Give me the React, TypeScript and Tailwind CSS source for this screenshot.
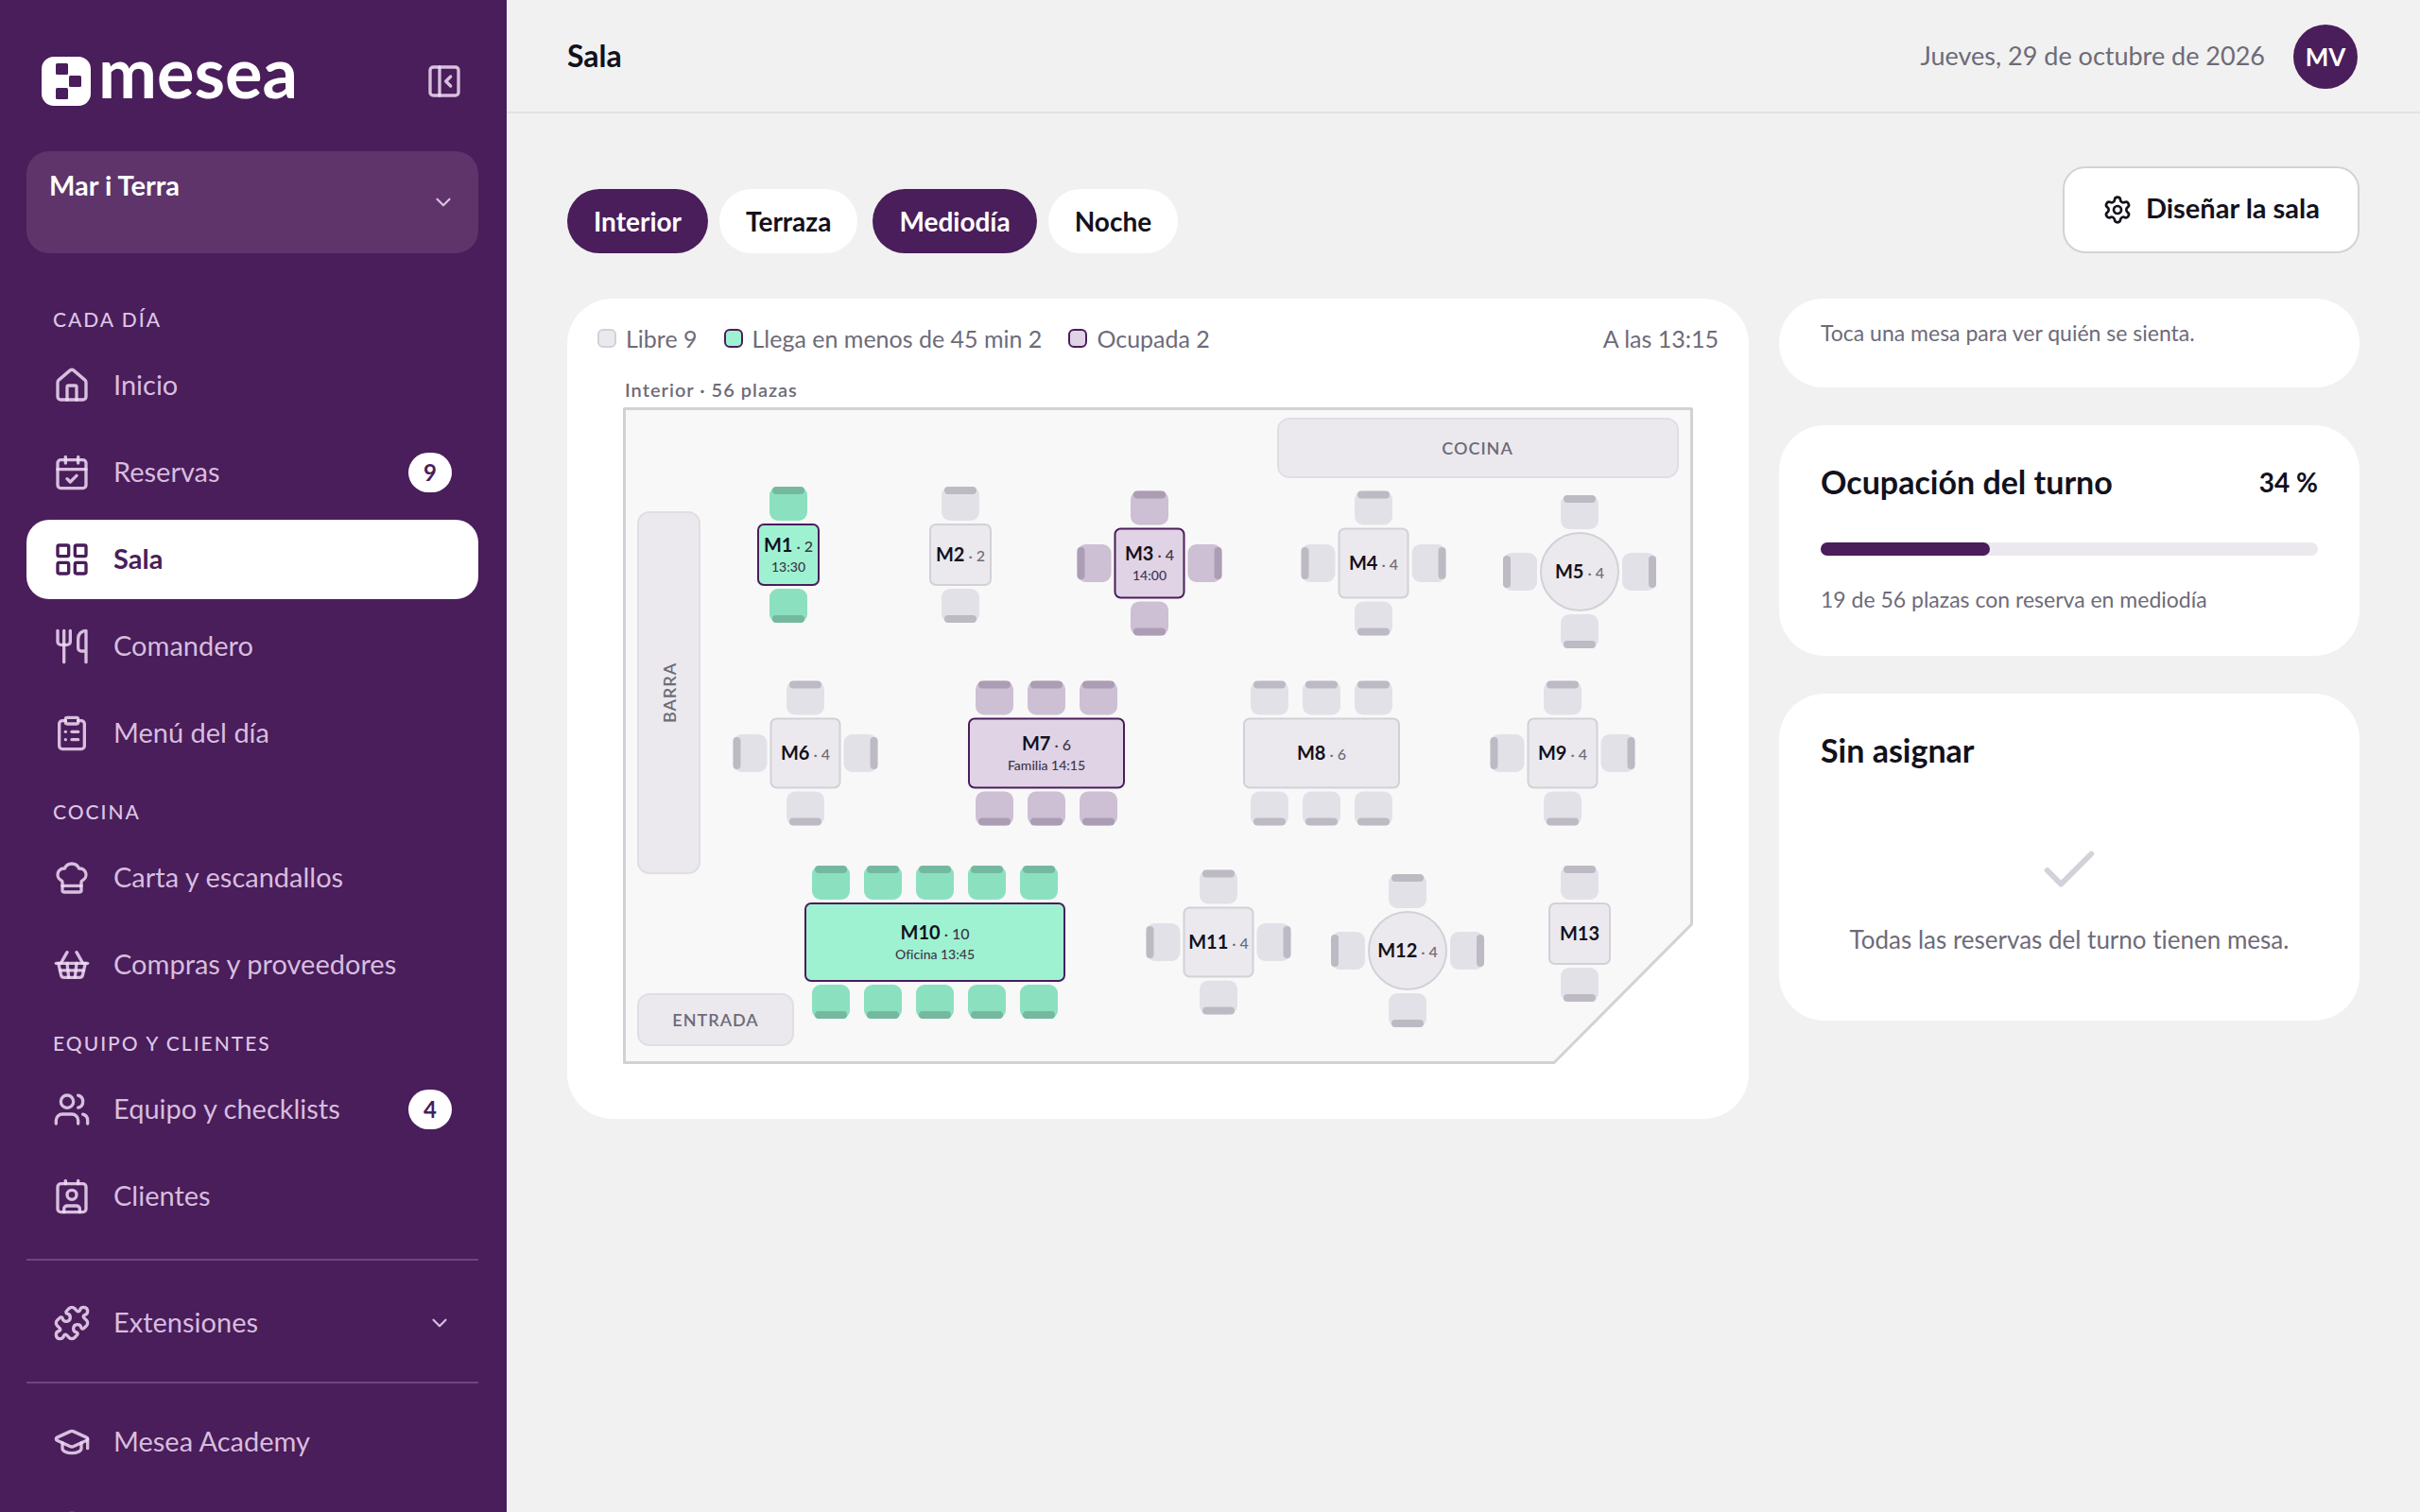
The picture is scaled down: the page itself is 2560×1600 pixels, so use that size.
import React, { useState } from 'react';
import {
  CalendarCheck,
  Check,
  ChefHat,
  ChevronDown,
  CircleHelp,
  ClipboardList,
  Contact,
  GraduationCap,
  House,
  LayoutGrid,
  PanelLeftClose,
  Puzzle,
  Settings,
  ShoppingBasket,
  Users,
  Utensils,
} from 'lucide-react';
import type { LucideIcon } from 'lucide-react';

type Status = 'libre' | 'llega' | 'ocupada';

interface NavEntry {
  label: string;
  icon: LucideIcon;
  badge?: number;
}

interface Mesa {
  name: string;
  seats?: number;
  x: number;
  y: number;
  w: number;
  h: number;
  perSide: number;
  sides?: boolean;
  round?: boolean;
  status?: Status;
  note?: string;
}

const sections: { title: string; items: NavEntry[] }[] = [
  {
    title: 'CADA DÍA',
    items: [
      { label: 'Inicio', icon: House },
      { label: 'Reservas', icon: CalendarCheck, badge: 9 },
      { label: 'Sala', icon: LayoutGrid },
      { label: 'Comandero', icon: Utensils },
      { label: 'Menú del día', icon: ClipboardList },
    ],
  },
  {
    title: 'COCINA',
    items: [
      { label: 'Carta y escandallos', icon: ChefHat },
      { label: 'Compras y proveedores', icon: ShoppingBasket },
    ],
  },
  {
    title: 'EQUIPO Y CLIENTES',
    items: [
      { label: 'Equipo y checklists', icon: Users, badge: 4 },
      { label: 'Clientes', icon: Contact },
    ],
  },
];

// x, y: centro de la mesa en el plano
const mesas: Mesa[] = [
  { name: 'M1', seats: 2, x: 202, y: 199, w: 64, h: 64, perSide: 1, status: 'llega', note: '13:30' },
  { name: 'M2', seats: 2, x: 384, y: 199, w: 64, h: 64, perSide: 1 },
  { name: 'M3', seats: 4, x: 584, y: 208, w: 73, h: 73, perSide: 1, sides: true, status: 'ocupada', note: '14:00' },
  { name: 'M4', seats: 4, x: 821, y: 208, w: 73, h: 73, perSide: 1, sides: true },
  { name: 'M5', seats: 4, x: 1039, y: 217, w: 82, h: 82, perSide: 1, sides: true, round: true },
  { name: 'M6', seats: 4, x: 220, y: 409, w: 73, h: 73, perSide: 1, sides: true },
  { name: 'M7', seats: 6, x: 475, y: 409, w: 164, h: 73, perSide: 3, status: 'ocupada', note: 'Familia 14:15' },
  { name: 'M8', seats: 6, x: 766, y: 409, w: 164, h: 73, perSide: 3 },
  { name: 'M9', seats: 4, x: 1021, y: 409, w: 73, h: 73, perSide: 1, sides: true },
  { name: 'M10', seats: 10, x: 357, y: 609, w: 274, h: 82, perSide: 5, status: 'llega', note: 'Oficina 13:45' },
  { name: 'M11', seats: 4, x: 657, y: 609, w: 73, h: 73, perSide: 1, sides: true },
  { name: 'M12', seats: 4, x: 857, y: 618, w: 82, h: 82, perSide: 1, sides: true, round: true },
  { name: 'M13', x: 1039, y: 600, w: 64, h: 64, perSide: 1 },
];

const mesaStyle: Record<Status, string> = {
  libre: 'fill-[#ebe9ee] stroke-[#d2d1d7]',
  llega: 'fill-[#9ff2d1] stroke-[#4a1d5b]',
  ocupada: 'fill-[#e0d3e6] stroke-[#4a1d5b]',
};

const sillaStyle: Record<Status, string> = {
  libre: 'fill-[#e3e1e8]',
  llega: 'fill-[#8be0bf]',
  ocupada: 'fill-[#cdbfd4]',
};

const respaldoStyle: Record<Status, string> = {
  libre: 'fill-[#bdbac3]',
  llega: 'fill-[#75b8a0]',
  ocupada: 'fill-[#ab9db3]',
};

const Silla: React.FC<{ angle: number; offset: number; distance: number; status: Status }> = ({
  angle,
  offset,
  distance,
  status,
}) => (
  <g transform={`rotate(${angle}) translate(${offset} ${-distance})`}>
    <rect x={-20} y={-40} width={40} height={36} rx={9} className={sillaStyle[status]} />
    <rect x={-17} y={-40} width={34} height={8} rx={4} className={respaldoStyle[status]} />
  </g>
);

const MesaShape: React.FC<{ mesa: Mesa }> = ({ mesa }) => {
  const status = mesa.status ?? 'libre';
  const offsets = Array.from({ length: mesa.perSide }, (_, i) => (i - (mesa.perSide - 1) / 2) * 55);

  return (
    <g transform={`translate(${mesa.x} ${mesa.y})`}>
      {offsets.map((offset) => (
        <React.Fragment key={offset}>
          <Silla angle={0} offset={offset} distance={mesa.h / 2} status={status} />
          <Silla angle={180} offset={offset} distance={mesa.h / 2} status={status} />
        </React.Fragment>
      ))}
      {mesa.sides && (
        <>
          <Silla angle={90} offset={0} distance={mesa.w / 2} status={status} />
          <Silla angle={270} offset={0} distance={mesa.w / 2} status={status} />
        </>
      )}
      <rect
        x={-mesa.w / 2}
        y={-mesa.h / 2}
        width={mesa.w}
        height={mesa.h}
        rx={mesa.round ? mesa.w / 2 : 6}
        strokeWidth={2}
        className={mesaStyle[status]}
      />
      <text y={mesa.note ? -3 : 7} textAnchor="middle" className="fill-[#13111c] text-[20px] font-bold">
        {mesa.name}
        {mesa.seats && (
          <tspan className={mesa.note ? 'fill-[#3d3548] text-[16px] font-medium' : 'fill-[#6e6b78] text-[16px] font-medium'}>
            {' · ' + mesa.seats}
          </tspan>
        )}
      </text>
      {mesa.note && (
        <text y={18} textAnchor="middle" className="fill-[#3d3548] text-[14px] font-medium">
          {mesa.note}
        </text>
      )}
    </g>
  );
};

const Plano: React.FC = () => (
  <svg viewBox="0 0 1186 764" className="block w-full" role="img" aria-label="Plano de la sala interior">
    <text x={29} y={32} className="fill-[#6e6b78] text-[20px] font-semibold tracking-[1px]">
      Interior · 56 plazas
    </text>
    <path
      d="M28.5 44.5H1157.5V590L1012 736.5H28.5Z"
      strokeWidth={3}
      strokeLinejoin="round"
      className="fill-[#f8f8f8] stroke-[#d2d2d6]"
    />
    {/* Elementos fijos */}
    <g strokeWidth={2} className="fill-[#ebe9ee] stroke-[#e0dee4]">
      <rect x={43} y={154} width={65} height={382} rx={12} />
      <rect x={720} y={55} width={423} height={62} rx={12} />
      <rect x={43} y={664} width={164} height={54} rx={12} />
    </g>
    <g textAnchor="middle" className="fill-[#6e6b78] text-[18px] font-semibold tracking-[1px]">
      <text transform="translate(83 345) rotate(-90)">BARRA</text>
      <text x={931} y={93}>COCINA</text>
      <text x={125} y={698}>ENTRADA</text>
    </g>
    {mesas.map((mesa) => (
      <MesaShape key={mesa.name} mesa={mesa} />
    ))}
  </svg>
);

const NavItem: React.FC<{ item: NavEntry; active?: boolean; chevron?: boolean }> = ({ item, active, chevron }) => {
  const Icon = item.icon;
  return (
    <a
      href="#"
      className={`flex h-[84px] shrink-0 items-center gap-6 rounded-3xl px-7 text-[29px] leading-8 ${
        active ? 'bg-white font-bold text-[#4a1d5b]' : 'text-[#f0dcf6]/85'
      }`}
    >
      <Icon size={40} className="shrink-0" />
      <span className="flex-1 whitespace-nowrap pb-0.5">{item.label}</span>
      {item.badge && (
        <span className="flex h-[42px] w-[46px] items-center justify-center rounded-full bg-white text-[24px] font-bold text-[#4a1d5b]">
          {item.badge}
        </span>
      )}
      {chevron && <ChevronDown size={26} />}
    </a>
  );
};

const Sidebar: React.FC = () => (
  <aside className="flex h-screen w-[536px] shrink-0 flex-col overflow-hidden bg-[#4a1d5b] pl-7 pr-[30px] pt-[60px]">
    <div className="flex h-[52px] shrink-0 items-center justify-between pl-4 pr-4">
      <div className="flex items-center gap-2 text-white">
        <svg viewBox="0 0 52 52" className="size-[52px]" aria-hidden="true">
          <rect width="52" height="52" rx="13" fill="currentColor" />
          <g className="fill-[#4a1d5b]">
            <rect x="15" y="7" width="13" height="12" rx="1.5" />
            <rect x="29" y="20" width="13" height="12" rx="1.5" />
            <rect x="15" y="33" width="13" height="12" rx="1.5" />
          </g>
        </svg>
        <span className="pb-5 text-[74px] leading-[72px] font-bold">mesea</span>
      </div>
      <button type="button" aria-label="Contraer menú" className="text-[#f0dcf6]/85">
        <PanelLeftClose size={40} />
      </button>
    </div>

    <button
      type="button"
      className="mt-12 flex h-[108px] shrink-0 items-center justify-between rounded-3xl bg-[#5e346b] px-6 text-left"
    >
      <span className="h-[68px] text-[29px] leading-8 font-bold text-white">Mar i Terra</span>
      <ChevronDown size={26} className="text-[#f0dcf6]/85" />
    </button>

    <nav className="mt-[29px] flex flex-col">
      {sections.map((section) => (
        <div key={section.title} className="flex flex-col">
          <h2 className="px-7 pb-[15px] pt-7 text-[21px] leading-[26px] font-medium tracking-[2px] text-[#dcc6e3]">
            {section.title}
          </h2>
          <div className="flex flex-col gap-2">
            {section.items.map((item) => (
              <NavItem key={item.label} item={item} active={item.label === 'Sala'} />
            ))}
          </div>
        </div>
      ))}
      <div className="mt-6 flex flex-col border-t-2 border-[#714580] pb-5 pt-6">
        <NavItem item={{ label: 'Extensiones', icon: Puzzle }} chevron />
      </div>
      <div className="flex flex-col gap-2 border-t-2 border-[#714580] pt-5">
        <NavItem item={{ label: 'Mesea Academy', icon: GraduationCap }} />
        <a href="#" aria-label="Ayuda" className="flex h-[84px] shrink-0 items-center px-7 text-[#f0dcf6]/85">
          <CircleHelp size={40} />
        </a>
      </div>
    </nav>
  </aside>
);

const Pill: React.FC<{ label: string; active: boolean; onClick: () => void }> = ({ label, active, onClick }) => (
  <button
    type="button"
    onClick={onClick}
    className={`h-[68px] rounded-full px-7 text-[28px] font-bold ${
      active ? 'bg-[#4a1d5b] text-white' : 'bg-white text-[#13111c]'
    }`}
  >
    {label}
  </button>
);

const LegendItem: React.FC<{ swatch: string; label: string }> = ({ swatch, label }) => (
  <li className="flex items-center gap-[10px]">
    <span className={`size-5 rounded-md border-2 ${swatch}`} />
    {label}
  </li>
);

const App: React.FC = () => {
  const [zone, setZone] = useState('Interior');
  const [shift, setShift] = useState('Mediodía');
  const occupancy = 34;

  return (
    <div className="flex h-screen overflow-hidden bg-[#f1f1f1] font-[Lato,sans-serif] text-[#13111c] [font-variant-ligatures:none]">
      <Sidebar />

      <div className="flex min-w-0 flex-1 flex-col">
        <header className="flex h-[120px] shrink-0 items-center justify-between border-b-2 border-[#e2e2e4] pl-16 pr-[66px] pt-0.5">
          <h1 className="pb-0.5 text-[32px] leading-9 font-bold">Sala</h1>
          <div className="flex items-center gap-[30px]">
            <span className="pb-0.5 text-[27px] text-[#6e6b78]">Jueves, 29 de octubre de 2026</span>
            <span className="flex size-[68px] items-center justify-center rounded-full bg-[#4a1d5b] text-[26px] font-bold text-white">
              MV
            </span>
          </div>
        </header>

        <main className="flex-1 px-16 pt-14">
          <div className="flex items-end justify-between">
            <div className="flex gap-4">
              <div className="flex gap-3">
                {['Interior', 'Terraza'].map((label) => (
                  <Pill key={label} label={label} active={zone === label} onClick={() => setZone(label)} />
                ))}
              </div>
              <div className="flex gap-3">
                {['Mediodía', 'Noche'].map((label) => (
                  <Pill key={label} label={label} active={shift === label} onClick={() => setShift(label)} />
                ))}
              </div>
            </div>
            <button
              type="button"
              className="flex h-[92px] items-center gap-[14px] rounded-3xl border-2 border-[#d3d2d8] bg-white px-10 text-[29px] font-bold"
            >
              <Settings size={32} />
              <span className="pb-1">Diseñar la sala</span>
            </button>
          </div>

          <div className="mt-12 grid grid-cols-[minmax(0,1fr)_614px] items-start gap-8">
            <section className="rounded-[48px] bg-white px-8 pb-8 pt-6">
              <div className="flex h-12 items-start justify-between text-[25px] leading-9 text-[#6e6b78]">
                <ul className="flex gap-7">
                  <LegendItem swatch="border-[#d2d1d7] bg-[#ebe9ee]" label="Libre 9" />
                  <LegendItem swatch="border-[#4a1d5b] bg-[#9ff2d1]" label="Llega en menos de 45 min 2" />
                  <LegendItem swatch="border-[#4a1d5b] bg-[#e0d3e6]" label="Ocupada 2" />
                </ul>
                <span>A las 13:15</span>
              </div>
              <Plano />
            </section>

            <div className="flex flex-col gap-10">
              <section className="h-[94px] rounded-[47px] bg-white px-11 pt-5">
                <p className="text-[23px] leading-8 text-[#6e6b78]">Toca una mesa para ver quién se sienta.</p>
              </section>

              <section className="rounded-[48px] bg-white px-11 pb-11 pt-10">
                <div className="flex items-center justify-between">
                  <h2 className="text-[34px] leading-10 font-bold">Ocupación del turno</h2>
                  <span className="text-[28px] leading-10 font-bold">{occupancy} %</span>
                </div>
                <div className="mt-11 h-[14px] rounded-full bg-[#ebe9ee]">
                  <div className="h-full rounded-full bg-[#4a1d5b]" style={{ width: `${occupancy}%` }} />
                </div>
                <p className="mt-[30px] text-[23px] leading-8 text-[#6e6b78]">
                  19 de 56 plazas con reserva en mediodía
                </p>
              </section>

              <section className="rounded-[48px] bg-white px-11 pb-[76px] pt-10">
                <h2 className="text-[34px] leading-10 font-bold">Sin asignar</h2>
                <div className="mt-[72px] flex flex-col items-center gap-7">
                  <Check size={70} className="text-[#d3d2da]" />
                  <p className="whitespace-nowrap text-[26px] leading-5 text-[#6e6b78]">
                    Todas las reservas del turno tienen mesa.
                  </p>
                </div>
              </section>
            </div>
          </div>
        </main>
      </div>
    </div>
  );
};

export default App;
